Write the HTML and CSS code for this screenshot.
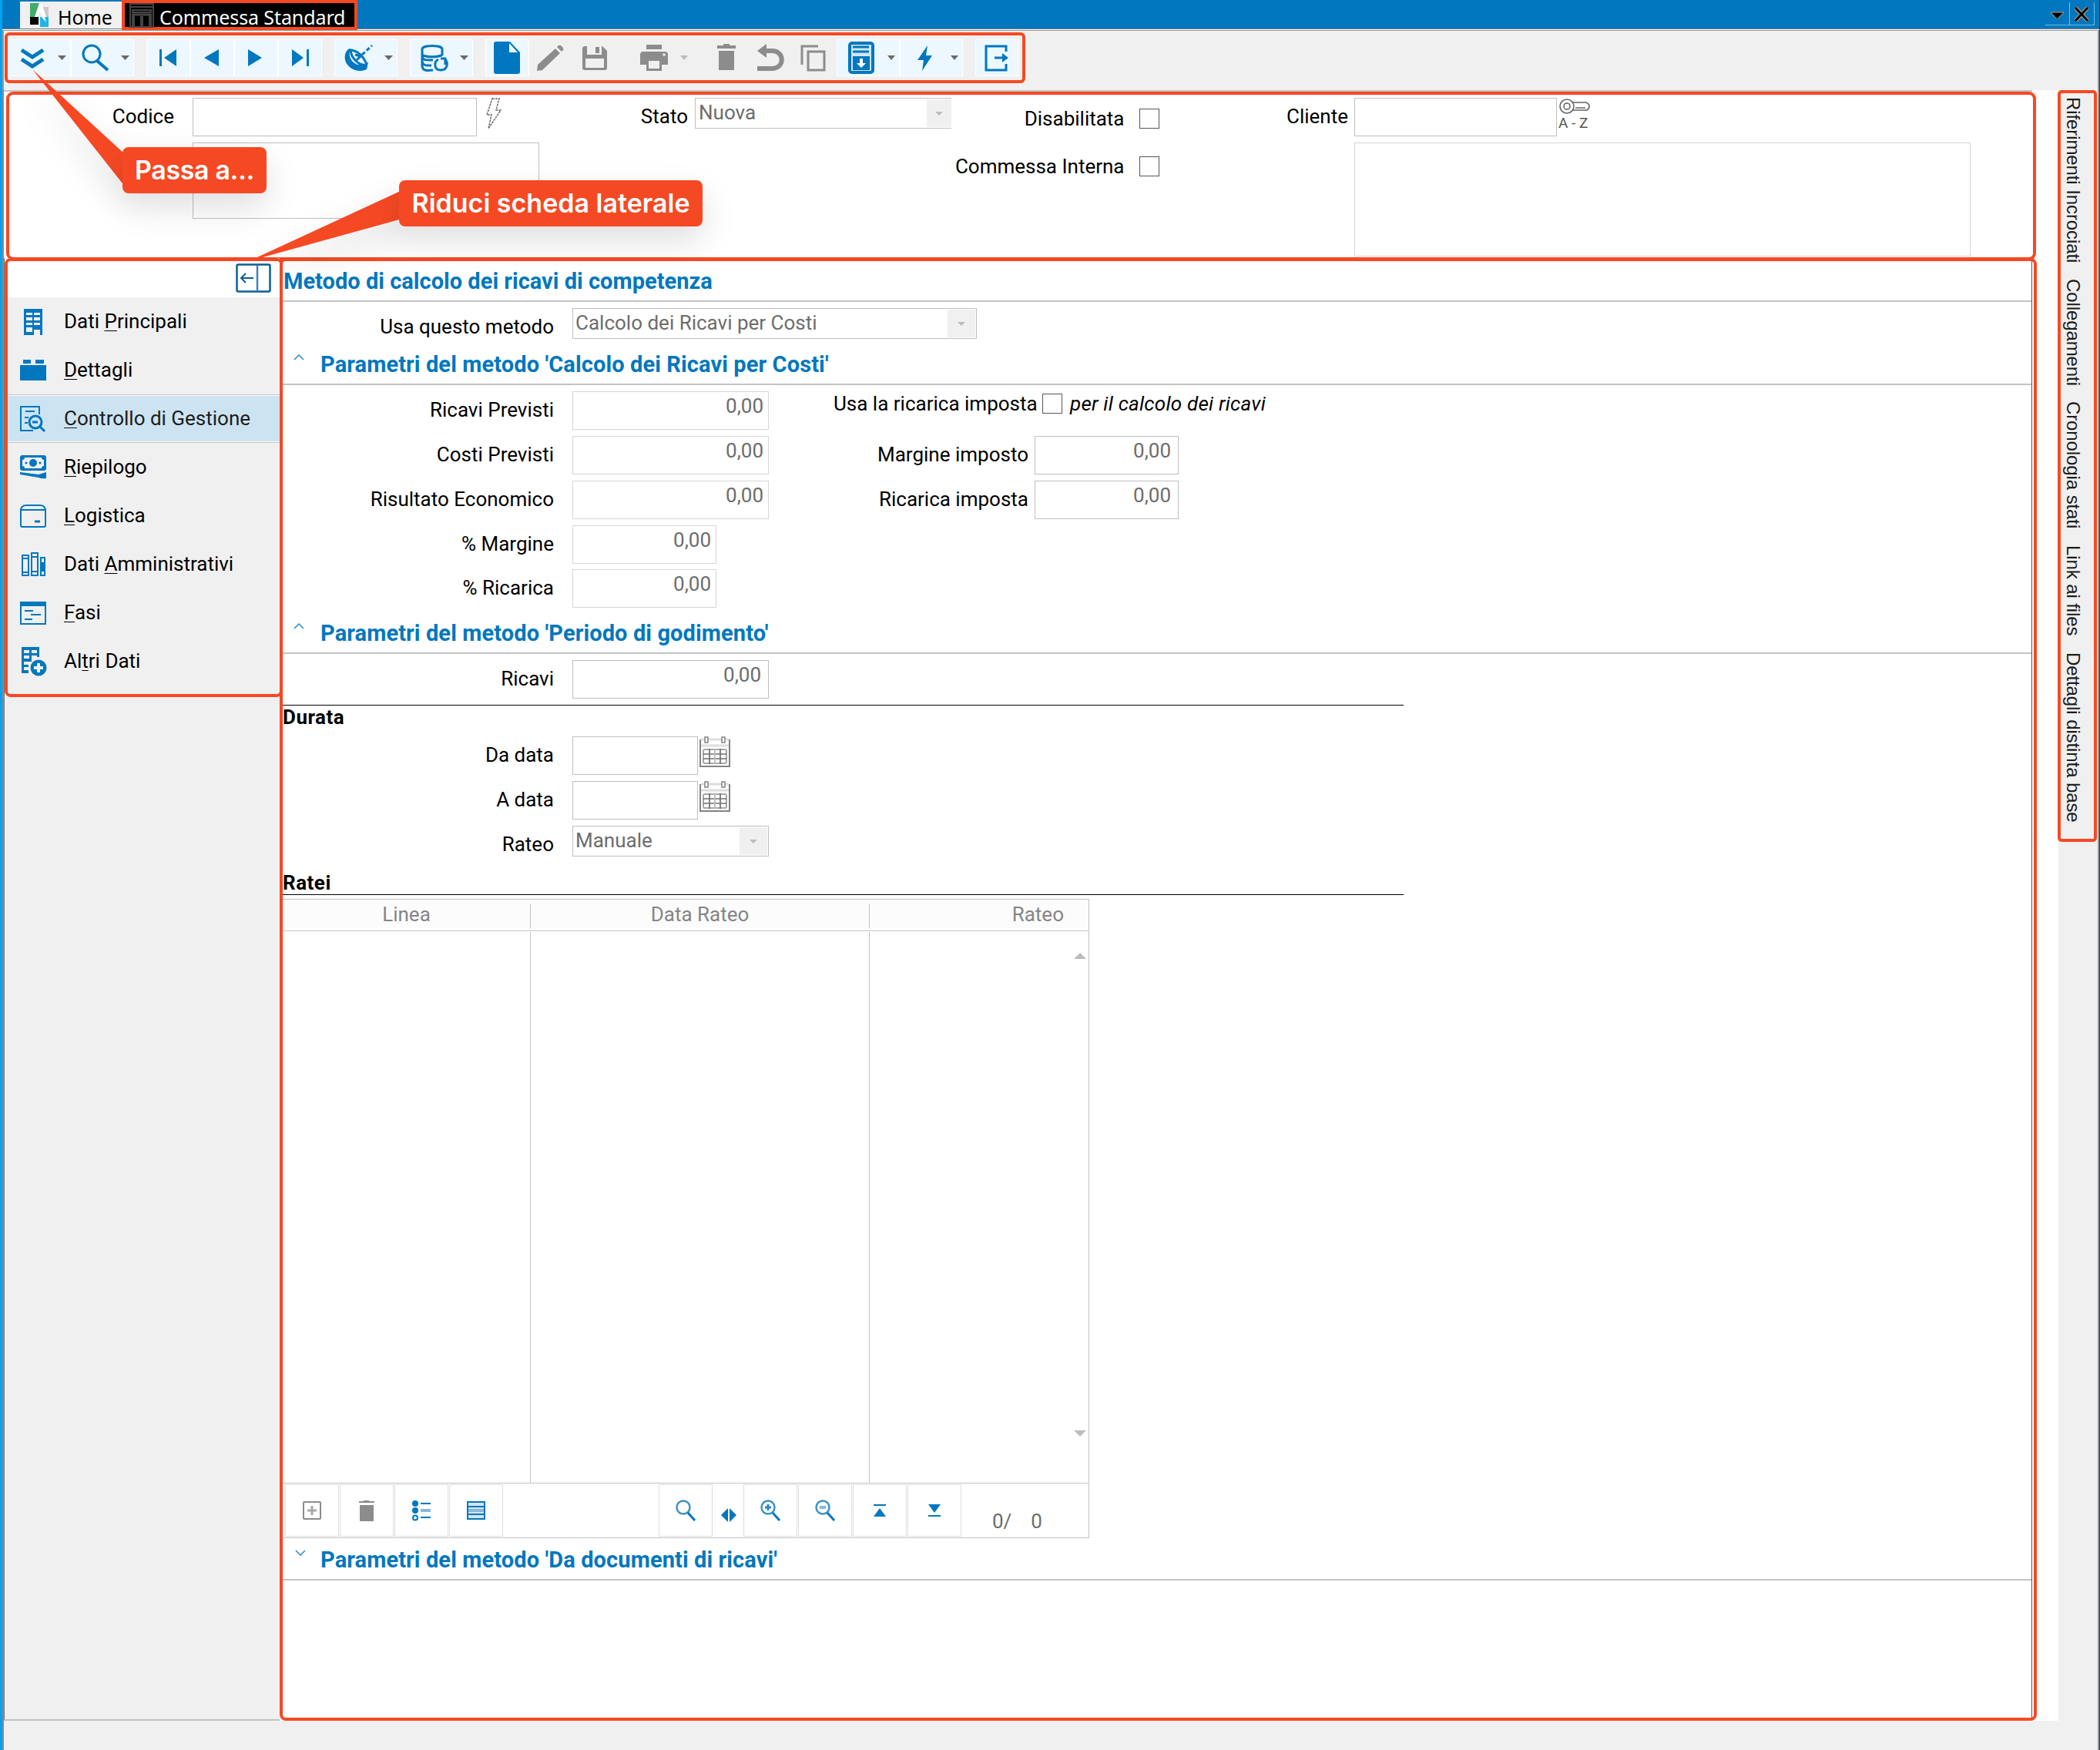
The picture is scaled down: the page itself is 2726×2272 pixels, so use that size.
FILE: index.html
```html
<!DOCTYPE html>
<html lang="it">
<head>
<meta charset="utf-8">
<title>Commessa Standard</title>
<link rel="stylesheet" href="styles.css">
</head>
<body>
<div class="app">
  <header class="titlebar">
    <div class="tab tab-home">
      <svg class="logo" width="26" height="32" viewBox="0 0 26 32"><path fill="#3dae6b" d="M1 0h12L8 18H1z"/><path fill="#c9c9c9" d="M13 5h12v13h-5z"/><path fill="#fff" d="M13 0h3l6 18h-4l-2-5h-3l-3 5H7z"/><path d="M1 18h11v10H1z"/><path fill="#1fb5e8" d="M14 18h11v13H14z"/><path fill="#fff" d="M16 18h4l2 7z"/></svg>
      <span>Home</span>
    </div>
    <div class="tab tab-active">
      <svg width="32" height="32" viewBox="0 0 32 32" fill="none" stroke="#444" stroke-width="2"><path d="M1 1h30v30H1zM1 5h30M4 9h24v3H4z"/><path d="M3 15h26" stroke-width="3"/><path d="M5 16v14M27 16v14M16 17v13" stroke-width="4"/></svg>
      <span>Commessa Standard</span>
    </div>
    <div class="winbtns">
      <div class="winbtn"><svg width="30" height="28" viewBox="0 0 30 28"><path d="M7 13h17l-8.500 9z" stroke="#b9a48c" stroke-width="1"/></svg></div>
      <div class="winbtn"><svg width="30" height="28" viewBox="0 0 30 28" fill="none"><path d="M7 7l16 17M23 7L7 24" stroke="#b9a48c" stroke-width="5"/><path d="M7 7l16 17M23 7L7 24" stroke="#000" stroke-width="3"/></svg></div>
    </div>
  </header>

  <div class="toolstrip">
    <div class="toolbar">
      <div class="tb on wide"><svg viewBox="0 0 82 48"><path class="l5" d="M18 14l14 9 14-9M18 26l14 9 14-9"/><path class="dd" d="M65 21h11l-5.500 6z"/></svg></div>
      <div class="tb on wide"><svg viewBox="0 0 82 48"><circle class="l3" cx="27" cy="19" r="11"/><path class="l4" d="M34 28l14 12"/><path class="dd" d="M65 21h11l-5.500 6z"/></svg></div>
      <i class="gap"></i>
      <div class="tb on"><svg viewBox="0 0 57 48"><path class="f" d="M17 13h3v22h-3zM39 13v22L23 24z"/></svg></div>
      <div class="tb on"><svg viewBox="0 0 57 48"><path class="f" d="M37 13v22L18 24z"/></svg></div>
      <div class="tb on"><svg viewBox="0 0 57 48"><path class="f" d="M18 13v22l18-11z"/></svg></div>
      <div class="tb on"><svg viewBox="0 0 57 48"><path class="f" d="M18 13v22l15-11zM37 13h3v22h-3z"/></svg></div>
      <i class="gap"></i>
      <div class="tb on wide"><svg viewBox="0 0 82 48"><path class="f" fill-rule="evenodd" d="M20 12c-6 2-9 13-3 21s17 10 25 6l2-9c-3 2-6 2-9 1-7-3-13-11-12-18zM20 16c0 5 4 12 12 17-6 0-14-8-12-17z"/><path class="l3" d="M23 14c8 2 15 9 19 18M29 27l6-6M27 20l7 2"/><path class="l3" stroke-dasharray="5 3" d="M36 20L49 8"/><path class="dd" d="M65 21h11l-5.500 6z"/></svg></div>
      <i class="gap"></i>
      <div class="tb on wide"><svg viewBox="0 0 82 48"><path class="l3" d="M16 13c0-6 26-6 26 0v6c0 5-26 5-26 0zM16 21c0 7 6 6 14 6M16 27c0 8 6 7 12 7M16 34c0 7 6 7 14 6M16 13v22M42 14v7"/><path class="l3" d="M37 26c-6 3-6 14 3 14 9 0 10-9 6-14M46 33v-8h-6"/><path class="dd" d="M65 21h11l-5.500 6z"/></svg></div>
      <i class="gap"></i>
      <div class="tb on"><svg viewBox="0 0 57 48"><path class="f" d="M14 3h18l13 14v25q0 3-3 3H14q-3 0-3-3V6q0-3 3-3z"/><path d="M31 5v12h11z" fill="#ecf7ff"/></svg></div>
      <div class="tb"><svg viewBox="0 0 57 48"><path class="g" d="M10 41l1-8 23-21 6 6-23 22zM36 10l2-2q3-1 5 2t1 4l-2 2z"/></svg></div>
      <div class="tb"><svg viewBox="0 0 57 48"><path class="g" fill-rule="evenodd" d="M15 9h23l6 6v22q0 3-3 3H15q-3 0-3-3V12q0-3 3-3zM18 9v11h19V9zM16 25v12h24V25z"/><path class="g" d="M29 10h5v8h-5z"/></svg></div>
      <i class="gap"></i>
      <div class="tb wide"><svg viewBox="0 0 82 48"><path class="g" fill-rule="evenodd" d="M22 7h20v6H22zM18 16h28q4 0 4 4v13h-8v8H22v-8h-8V20q0-4 4-4zM25 28v10h14V28z"/><circle cx="45" cy="20" r="1.800" fill="#f0f0f0"/><path fill="#bcbcbc" d="M66 21h10l-5 6z"/></svg></div>
      <i class="gap"></i>
      <div class="tb"><svg viewBox="0 0 57 48"><path class="g" d="M24 6h8v2h8v4H16V8h8zM18 15h20v25H18z"/></svg></div>
      <div class="tb"><svg viewBox="0 0 57 48"><path fill="none" stroke="#8c8c8c" stroke-width="6" d="M18 15h12c17 0 17 23 0 23H11"/><path class="g" d="M11 15l12-9v18z"/></svg></div>
      <div class="tb"><svg viewBox="0 0 57 48"><path fill="none" stroke="#8c8c8c" stroke-width="3" d="M12 33V9h21M20 16h21v24H20z"/></svg></div>
      <div class="tb on wide"><svg viewBox="0 0 82 48"><rect x="17" y="5" width="30" height="38" rx="3" fill="#cfe6f5" stroke="#0077be" stroke-width="4"/><path class="l3" d="M21 10h21M21 16h21"/><path class="f" d="M21 22h22v18H21z"/><path d="M30 25h4v6h4l-6 6-6-6h4z" fill="#fff"/><path class="dd" d="M66 21h10l-5 6z"/></svg></div>
      <div class="tb on wide"><svg viewBox="0 0 82 48"><path class="f" d="M36 8L23 27h8l-2 14 13-20h-8z"/><path class="dd" d="M66 21h10l-5 6z"/></svg></div>
      <i class="gap"></i>
      <div class="tb on"><svg viewBox="0 0 57 48"><path class="l3" d="M40 16V9H14v31h26v-8M25 24h13"/><path class="f" d="M35 18l8 6-8 6z"/></svg></div>
    </div>
  </div>

  <div class="work">
    <div class="pages">
      <div class="pageline"></div>
      <section class="head">
        <label class="lb a">Codice</label>
        <div class="cell"><div class="fld codice"></div>
          <svg class="zap" width="22" height="42" viewBox="0 0 22 42" fill="none" stroke="#6b6b6b" stroke-width="1.500" stroke-dasharray="3 1"><path d="M9 1h9l-4 15h6L4 40l4-18H2z"/></svg></div>
        <label class="lb b">Stato</label>
        <div class="combo open"><span>Nuova</span><b><i></i></b></div>
        <label class="lb c low3">Disabilitata</label>
        <div class="chk k1"></div>
        <label class="lb d">Cliente</label>
        <div class="cell"><div class="fld cliente"></div>
          <div class="keybox"><svg width="42" height="22" viewBox="0 0 42 22" fill="none" stroke="#666" stroke-width="1.600"><circle cx="11" cy="11" r="9"/><circle cx="11" cy="11" r="4"/><path d="M19 6h17q4 2 4 5t-3 5H19M22 13h13" /></svg><span>A - Z</span></div></div>
        <i></i>
        <div class="area"></div>
        <i></i><i></i>
        <label class="lb c low7">Commessa Interna</label>
        <div class="chk k2"></div>
        <i></i>
        <div class="area2"></div>
      </section>

      <div class="lower">
        <div class="sidecol">
          <nav class="side">
            <div class="sidetop"><svg width="46" height="38" viewBox="0 0 46 38" fill="none" stroke="#0b5f98" stroke-width="2.500"><rect x="1.500" y="1.500" width="43" height="35" rx="2"/><path d="M28 2v34" stroke="#3e86b8"/><path d="M23 19H7M13 13l-6 6 6 6" stroke-width="2"/></svg></div>
            <div class="nav"><svg viewBox="0 0 34 34"><path class="f" fill-rule="evenodd" d="M5 0h24v34h-3v-7H18v7H5zM8 5v3h8V5zM18 5v3h8V5zM8 11v4h8v-4zM18 11v4h8v-4zM8 18v3h8v-3zM18 18v3h8v-3zM8 24v6h8v-6z"/></svg><span>Dati <u>P</u>rincipali</span></div>
            <div class="nav"><svg viewBox="0 0 34 34"><path class="f" d="M4 3h10v5H4zM20 3h11v5H20zM0 10h34v20H0z"/></svg><span><u>D</u>ettagli</span></div>
            <div class="nav sel"><svg viewBox="0 0 34 34"><path class="l2" d="M17 32H1V1h24v10M7 7h12M6 15h5M6 22h4"/><circle class="l3" cx="20" cy="21" r="8"/><path class="l3" d="M26 27l6 6M16 21h7"/></svg><span><u>C</u>ontrollo di Gestione</span></div>
            <div class="nav"><svg viewBox="0 0 34 34"><path class="f" fill-rule="evenodd" d="M3 1h28q3 0 3 3v14q0 3-3 3H3q-3 0-3-3V4q0-3 3-3zM6 4q0 3-3 3v8q3 0 3 3h22q0-3 3-3V7q-3 0-3-3z"/><circle class="f" cx="17" cy="11" r="5"/><circle class="f" cx="8" cy="11" r="1.500"/><circle class="f" cx="26" cy="11" r="1.500"/><path class="f" d="M0 23l24 3 10-3v8q-6 1-10-1L0 26z"/></svg><span><u>R</u>iepilogo</span></div>
            <div class="nav"><svg viewBox="0 0 34 34"><path class="l2" d="M1 9h32v20q0 2-2 2H3q-2 0-2-2zM1 9q1-6 7-6h18q6 0 7 6"/><path class="l3" d="M19 24h7"/></svg><span><u>L</u>ogistica</span></div>
            <div class="nav"><svg viewBox="0 0 34 34"><path class="l2" d="M3 5h8v26H3zM15 2h8v29h-8zM27 8h5v23h-5zM3 9h8M3 27h8M15 7h8M15 26h8"/><path class="f" d="M26 14h7v12h-7z"/></svg><span>Dati <u>A</u>mministrativi</span></div>
            <div class="nav"><svg viewBox="0 0 34 34"><path class="l2" d="M1 4h32v27H1z"/><path class="f" d="M0 2h34v6H0z"/><path class="l2" d="M6 14h11M14 19h13M6 25h10"/></svg><span><u>F</u>asi</span></div>
            <div class="nav"><svg viewBox="0 0 34 34"><path class="f" fill-rule="evenodd" d="M2 -2h23v13h-10v6H5v4h6v3H5v4h6v4H2zM5 2v4h7V2zM15 2v4h7V2zM5 9v4h7V9zM15 9v2h7V9z"/><circle class="f" cx="24" cy="25" r="10.500"/><path d="M22 19h4v4h4v4h-4v4h-4v-4h-4v-4h4z" fill="#f0f0f0"/></svg><span>Al<u>t</u>ri Dati</span></div>
          </nav>
        </div>

        <main class="main">
          <div class="inner">
            <h2 class="first">Metodo di calcolo dei ricavi di competenza</h2>
            <div class="row r-metodo"><label class="lb m">Usa questo metodo</label><div class="combo metodo"><span>Calcolo dei Ricavi per Costi</span><b><i></i></b></div></div>
            <h2><svg width="14" height="8" viewBox="0 0 14 8"><path d="M1 7l6-6 6 6"/></svg>Parametri del metodo 'Calcolo dei Ricavi per Costi'</h2>
            <div class="two">
              <div class="col">
                <div class="row"><label class="lb m">Ricavi Previsti</label><div class="fld num w255 pale">0,00</div></div>
                <div class="row"><label class="lb m">Costi Previsti</label><div class="fld num w255 pale">0,00</div></div>
                <div class="row"><label class="lb m">Risultato Economico</label><div class="fld num w255 pale">0,00</div></div>
                <div class="row short"><label class="lb m">% Margine</label><div class="fld num w187 pale">0,00</div></div>
                <div class="row"><label class="lb m">% Ricarica</label><div class="fld num w187 pale">0,00</div></div>
              </div>
              <div class="col right">
                <div class="row ric"><label class="lb n">Usa la ricarica imposta</label><div class="chk k3"></div><em>per il calcolo dei ricavi</em></div>
                <div class="row"><label class="lb o">Margine imposto</label><div class="fld num w187 p9">0,00</div></div>
                <div class="row"><label class="lb o">Ricarica imposta</label><div class="fld num w187 p9">0,00</div></div>
              </div>
            </div>
            <h2 class="h3"><svg width="14" height="8" viewBox="0 0 14 8"><path d="M1 7l6-6 6 6"/></svg>Parametri del metodo 'Periodo di godimento'</h2>
            <div class="row ricavi"><label class="lb m">Ricavi</label><div class="fld num w255 p9">0,00</div></div>
            <h3 class="durata">Durata</h3>
            <div class="row"><label class="lb m">Da data</label><div class="fld w163"></div><svg class="cal" width="40" height="40" viewBox="0 0 40 40"><use href="#cal"/></svg></div>
            <div class="row"><label class="lb m">A data</label><div class="fld w163"></div><svg class="cal" width="40" height="40" viewBox="0 0 40 40"><use href="#cal"/></svg></div>
            <div class="row"><label class="lb m">Rateo</label><div class="combo rateo"><span>Manuale</span><b><i></i></b></div></div>
            <h3 class="ratei">Ratei</h3>
            <div class="grid">
              <div class="ghead"><span class="g1">Linea</span><span class="g2">Data Rateo</span><span class="g3">Rateo</span></div>
              <div class="gbody"><div class="g1"></div><div class="g2"></div><div class="g3"><i class="up"></i><i class="down"></i></div></div>
              <div class="gfoot">
                <div class="gb"><svg viewBox="0 0 24 30" fill="none" stroke="#8c8c8c" stroke-width="2"><rect x="1" y="4" width="22" height="22" rx="1"/><path d="M12 9v12M6 15h12" stroke="#a8a8a8" stroke-width="3"/></svg></div>
                <div class="gb"><svg viewBox="0 0 24 30"><path class="g" d="M8 2h7v1h7v2H2V3h6zM3 8h18v21H3z"/></svg></div>
                <div class="gb"><svg viewBox="0 0 24 30"><circle class="f" cx="4" cy="6" r="4"/><circle class="f" cx="4" cy="15" r="4"/><circle class="l2" cx="4" cy="24.500" r="3"/><path class="l2" d="M11 6h13M11 24h13"/><path stroke="#86b9dc" stroke-width="4" d="M11 15h13"/></svg></div>
                <div class="gb"><svg viewBox="0 0 24 30"><rect x="1" y="4" width="22" height="22" fill="#d5e4ee" stroke="#0077be" stroke-width="2"/><path stroke="#86b9dc" stroke-width="4" d="M2 15h20"/><path class="l2" d="M1 10h22M1 20h22"/></svg></div>
                <i class="sp"></i>
                <div class="gb"><svg viewBox="0 0 28 30"><circle class="l2 soft" cx="11" cy="11" r="8.500"/><path class="l3" d="M17 18l9 10"/></svg></div>
                <div class="split"><svg width="20" height="18" viewBox="0 0 20 18"><path class="f" d="M9 0v18L0 9zM11 0v18l9-9z"/></svg></div>
                <div class="gb"><svg viewBox="0 0 28 30"><circle class="l2 soft" cx="11" cy="11" r="8.500"/><path class="l3" d="M17 18l9 10"/><path stroke="#2b8ac6" stroke-width="3" d="M11 7v8M7 11h8"/></svg></div>
                <div class="gb"><svg viewBox="0 0 28 30"><circle class="l2 soft" cx="11" cy="11" r="8.500"/><path class="l3" d="M17 18l9 10"/><path stroke="#86b9dc" stroke-width="4" d="M7 11h8"/></svg></div>
                <div class="gb"><svg viewBox="0 0 24 30"><path class="f" d="M4 7h16v2H4zM12 12l8 11H4z"/></svg></div>
                <div class="gb"><svg viewBox="0 0 24 30"><path class="f" d="M4 7h16l-8 11zM4 21h16v2H4z"/></svg></div>
                <div class="count"><span>0/</span><span>0</span></div>
              </div>
            </div>
            <h2 class="h4"><svg width="14" height="8" viewBox="0 0 14 8"><path d="M1 1l6 6 6-6"/></svg>Parametri del metodo 'Da documenti di ricavi'</h2>
          </div>
        </main>
      </div>
    </div>

    <aside class="rail">
      <div class="railbox">
        <span class="s1">Riferimenti Incrociati</span>
        <span class="s2">Collegamenti</span>
        <span class="s3">Cronologia stati</span>
        <span class="s4">Link ai files</span>
        <span class="s5">Dettagli distinta base</span>
      </div>
    </aside>
  </div>

  <svg class="tails" width="960" height="400" viewBox="0 0 960 400"><path d="M42 90L162 200v42z"/><path d="M323 339L522 247v37z"/></svg>
  <div class="callout c1"><span>Passa a...</span></div>
  <div class="callout c2"><span>Riduci scheda laterale</span></div>
</div>

<svg class="defs" width="0" height="0"><defs><g id="cal"><path d="M1 4v35h38V4" fill="none" stroke="#838383" stroke-width="2"/><path d="M2 4h36" stroke="#dedede" stroke-width="3"/><path d="M2 12h36" stroke="#dedede" stroke-width="3"/><rect x="7" y="1" width="4" height="7" fill="#fff" stroke="#838383" stroke-width="1.500"/><rect x="29" y="1" width="4" height="7" fill="#fff" stroke="#838383" stroke-width="1.500"/><rect x="5" y="17" width="30" height="18" rx="2" fill="none" stroke="#a8a8a8" stroke-width="2"/><path d="M13 16v20M27 16v20M5 23h30M5 29h30" stroke="#707070" stroke-width="1.700" fill="none"/><path d="M20 16v20" stroke="#bdbdbd" stroke-width="2"/></g></defs></svg>
</body>
</html>
```

FILE: styles.css
```css
* { box-sizing: border-box; }
body { margin: 0; font-family: Roboto, "Liberation Sans", sans-serif; font-size: 26px; color: #000; background: #f0f0f0; }
i, em { font-style: normal; }
.app { position: relative; width: 2726px; height: 2272px; display: flex; flex-direction: column; overflow: hidden; background: #f0f0f0; border-left: 3px solid #00a2f5; border-right: 1px solid #1d2f57; }

.f { fill: #0077be; }
.g { fill: #8c8c8c; }
.dd { fill: #6a6a6a; }
.l2, .l3, .l4, .l5 { fill: none; stroke: #0077be; }
.l2 { stroke-width: 2; }
.l3 { stroke-width: 3; }
.l4 { stroke-width: 4; }
.l5 { stroke-width: 5; }
.soft { stroke: #3b92ca; stroke-width: 2.500px; }

/* Title bar and document tabs */
.titlebar { height: 40px; flex: none; display: flex; background: #0077be; border-bottom: 1px solid #999; box-shadow: inset 0 -1px #fff, inset 0 -2px #777; padding-left: 23px; font-family: "Noto Sans", "Open Sans", sans-serif; font-size: 25px; letter-spacing: -0.100px; }
.tab { display: flex; white-space: nowrap; }
.tab-home { width: 132px; height: 35px; margin-top: 2px; padding: 2px 0 0 12px; background: #f0f0f0; }
.tab-home span { line-height: 40px; margin: -2px 0 0 11px; }
.tab-active { width: 306px; height: 39px; border: 4px solid #f54924; background: #000; color: #fff; padding-left: 6px; }
.tab-active span { margin-left: 7px; line-height: 36px; }
.winbtns { margin-left: auto; display: flex; padding: 3px 6px 0 0; }
.winbtn { width: 32px; height: 30px; border-right: 1px solid #7db9e4; border-bottom: 1px solid #7db9e4; }

/* Command toolbar */
.toolstrip { height: 77px; flex: none; padding: 2px 0 0 3px; border-left: 2px solid #9a9a9a; border-right: 2px solid #9a9a9a; }
.toolbar { width: 1325px; height: 66px; margin-left: -2px; border: 4px solid #f54924; border-radius: 6px; display: flex; padding: 5px 0 0; }
.tb { width: 57px; height: 48px; flex: none; }
.tb.wide { width: 82px; }
.tb.on { background: #ecf7ff; outline: 1px solid #fff; outline-offset: -1px; }
.tb svg { display: block; width: 100%; height: 100%; }
.gap { width: 16px; flex: none; }

/* Header fields */
.work { flex: 1; display: flex; border-left: 2px solid #8a8a8a; border-right: 2px solid #9a9a9a; min-height: 0; }
.pages { width: 2667px; height: 2117px; flex: none; background: #fff; }
.pageline { width: 2633px; height: 2px; background: #c3c3c3; }
.head { margin-left: 3px; width: 2635px; height: 219px; border: 4px solid #f54924; border-radius: 9px; padding-top: 4px; display: grid; grid-template-columns: 238px 450px 202px 333px 244px 26px 253px 800px; grid-template-rows: 58px 148px; align-items: start; }
.lb { display: block; line-height: 48px; text-align: right; white-space: nowrap; }
.a { padding-right: 24px; }
.b { padding-right: 9px; }
.c { padding-right: 19.500px; }
.d { padding-right: 8px; }
.low3 { margin-top: 3px; }
.low7 { margin-top: 7px; }
.cell { display: flex; }
.fld { height: 50px; border: 1px solid #bfbfbf; background: #fff; flex: none; }
.codice { width: 369px; }
.cliente { width: 263px; }
.zap { margin-left: 11px; }
.keybox { width: 44px; margin-left: 2px; color: #555; }
.keybox svg { display: block; }
.keybox span { display: block; font-size: 19px; line-height: 22px; white-space: nowrap; }
.combo { height: 40px; border: 1px solid #bfbfbf; background: #fff; display: flex; justify-content: space-between; color: #6d6d6d; padding: 1px; }
.combo span { line-height: 35px; margin-left: 2px; white-space: nowrap; }
.combo b { width: 36px; background: #f0f0f0; display: flex; align-items: center; justify-content: center; }
.combo b i { border: 5px solid transparent; border-top-color: #bcbcbc; border-bottom: 0; }
.combo.open { border-right: 0; padding-right: 0; }
.combo.open span { margin-left: 3px; }
.combo.open b { width: 32px; }
.chk { width: 26px; height: 26px; flex: none; border: 1px solid #555; background: #fff; }
.k1 { margin-top: 14px; }
.k2 { margin-top: 18px; }
.area { width: 450px; height: 99px; border: 1px solid #bfbfbf; }
.area2 { width: 800px; height: 148px; border: 1px solid #d6d6d6; }

/* Side navigation */
.lower { display: flex; height: 1899px; margin-top: -3px; }
.sidecol { width: 358px; background: #f0f0f0; border-left: 1px solid #777; border-bottom: 2px solid #c3c3c3; flex: none; }
.side { width: 361px; height: 570px; border: 4px solid #f54924; border-radius: 8px; background: #f0f0f0; overflow: hidden; }
.sidetop { height: 47px; background: #fff; display: flex; justify-content: flex-end; padding: 3px 11px 0 0; }
.nav { height: 63px; display: flex; align-items: center; padding-left: 16px; }
.nav svg { width: 34px; height: 34px; margin-right: 23px; overflow: visible; }
.nav span { line-height: 63px; white-space: nowrap; }
.nav u { text-decoration-thickness: 1px; text-underline-offset: 3px; }
.nav.sel { padding: 1px 0; background: #cce4f2; color: #1c1c1c; border-top: 1px solid #c3c3c3; border-bottom: 1px solid #c3c3c3; box-shadow: inset 0 1px #fff, inset 0 -1px #fff; }
.sel svg { margin-left: 16px; }

/* Main panel */
.main { position: relative; width: 2281px; height: 1899px; flex: none; border: 4px solid #f54924; border-radius: 8px; background: #fff; }
.inner { width: 2271px; height: 1891px; border-right: 1px solid #555; }
h2 { margin: 0; height: 60px; font-size: 29px; font-weight: 700; line-height: 67px; letter-spacing: 0.110px; color: #0077be; border-bottom: 2px solid #c3c3c3; padding-left: 14px; display: flex; white-space: nowrap; }
h2 svg { flex: none; margin: 20px 21px 0 0; fill: none; stroke: #2a8bc8; stroke-width: 1.500; }
h2.first { height: 53px; line-height: 53px; padding-left: 1px; letter-spacing: 0.020px; }
.row { display: flex; height: 58px; align-items: flex-start; }
.row.short { height: 57px; }
.r-metodo { padding-top: 8px; height: 48px; }
.m { width: 376px; padding-right: 24px; flex: none; }
.metodo { width: 525px; }
.rateo { width: 255px; }
.two { display: flex; padding-top: 8px; height: 288px; }
.col.right { margin-left: 84px; }
.num { text-align: right; line-height: 36px; color: #6d6d6d; padding-right: 6px; }
.p9 { padding-right: 9px; }
.pale { border-color: #d6d6d6; }
.w255 { width: 255px; }
.w187 { width: 187px; }
.w163 { width: 163px; }
.n { width: 271px; padding-right: 7px; margin-top: -8px; }
.o { width: 261px; padding-right: 8px; }
.k3 { margin-top: 3px; }
.ric em { font-style: italic; line-height: 48px; margin: -8px 0 0 10px; white-space: nowrap; letter-spacing: 0.220px; }
h2.h3 { height: 61px; line-height: 69px; }
h2.h3 svg { margin-top: 21px; }
.ricavi { padding-top: 8px; height: 66px; }
h3 { margin: 0; font-size: 26px; font-weight: 700; letter-spacing: 0.500px; width: 1455px; white-space: nowrap; }
.durata { border-top: 1px solid #000; height: 41px; line-height: 31px; }
.ratei { height: 32px; line-height: 33px; border-bottom: 1px solid #000; margin-bottom: 5px; }
.cal { margin-left: 2px; }

/* Accruals table */
.grid { width: 1047px; height: 830px; border: 1px solid #c3c3c3; border-left: 0; color: #858585; }
.ghead { height: 41px; display: flex; background: #fcfcfc; border-bottom: 1px solid #c3c3c3; padding: 5px 0 3px; line-height: 29px; text-align: center; }
.g1 { width: 322px; border-right: 1px solid #c3c3c3; }
.g2 { width: 440px; border-right: 1px solid #c3c3c3; }
.ghead .g3 { width: 252px; text-align: right; }
.gbody { height: 717px; padding-top: 1px; display: flex; border-bottom: 1px solid #c3c3c3; }
.gbody .g3 { flex: 1; display: flex; flex-direction: column; justify-content: space-between; align-items: flex-end; padding: 27px 3px 60px 0; }
.up, .down { border: 8px solid transparent; }
.up { border-bottom-color: #bcbcbc; border-top: 0; }
.down { border-top-color: #bcbcbc; border-bottom: 0; }
.gfoot { height: 70px; display: flex; gap: 1px; padding: 1px 0 0 3px; }
.gb { width: 70px; height: 68px; border: 1px solid #dedede; display: flex; align-items: center; justify-content: center; flex: none; }
.gb svg { height: 30px; }
.sp { width: 200px; }
.split { width: 38px; padding: 31px 0 0 10px; }
.split svg { display: block; }
.count { display: flex; gap: 25px; color: #6d6d6d; line-height: 96px; margin-left: 39px; }
h2.h4 { height: 55px; line-height: 57px; }
h2.h4 svg { margin: 15px 19px 0 2px; }

/* Vertical tab rail */
.rail { width: 50px; }
.railbox { width: 51px; height: 976px; margin-left: -1px; border: 4px solid #f54924; border-radius: 5px; writing-mode: vertical-rl; display: flex; align-items: flex-start; justify-content: flex-start; padding: 5px 5px 0 0; font-family: "Liberation Sans", Arial, sans-serif; font-size: 24px; line-height: 43px; letter-spacing: -0.100px; color: #1c1c1c; white-space: nowrap; }
.s1 { height: 236px; }
.s2 { height: 159px; }
.s3 { height: 187px; }
.s4 { height: 139px; }

/* Annotations over the form */
.tails { position: absolute; left: -3px; top: 0; fill: #f54924; filter: drop-shadow(0 18px 22px rgba(0,0,0,.12)); }
.callout { position: absolute; height: 60px; border-radius: 8px; background: #f54924; color: #fff; font: 600 34px/59px Inter, sans-serif; text-align: center; white-space: nowrap; box-shadow: 0 18px 44px rgba(0,0,0,.13); }
.c1 { left: 156px; top: 191px; width: 187px; letter-spacing: -0.350px; }
.c2 { left: 515px; top: 234px; width: 394px; }
.defs { position: absolute; }
```
